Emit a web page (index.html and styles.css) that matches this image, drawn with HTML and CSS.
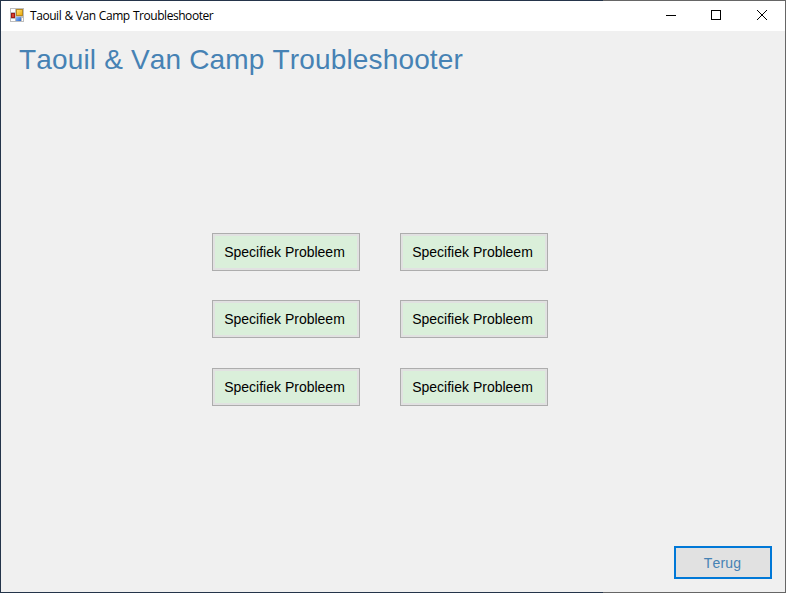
FILE: index.html
```html
<!DOCTYPE html>
<html lang="nl">
<head>
<meta charset="utf-8">
<title>Taouil &amp; Van Camp Troubleshooter</title>
<link rel="stylesheet" href="styles.css">
</head>
<body>
<div class="window">
  <header class="titlebar">
    <svg class="app-icon" width="14" height="14" viewBox="0 0 14 14">
      <defs>
        <linearGradient id="gold" x2="1" y2="1"><stop offset="0" stop-color="#ffe680"/><stop offset="1" stop-color="#eda600"/></linearGradient>
        <linearGradient id="blue" x2="1" y2="1"><stop offset="0" stop-color="#8cbcff"/><stop offset="1" stop-color="#2f68c8"/></linearGradient>
      </defs>
      <path d="M0 0h14v14H0z" fill="#bdbdbd"/>
      <path d="M1 1h4v3H1zM1 11h4v2H1zM12 10h1v3h-1z" fill="#fff"/>
      <rect x="6.5" y="1.5" width="6" height="6" fill="url(#gold)" stroke="#b98a20"/>
      <rect x="1.5" y="5.5" width="3" height="4" fill="#d9402d" stroke="#9d1c17"/>
      <rect x="6" y="9" width="5" height="4" fill="url(#blue)"/>
    </svg>
    <span class="caption">Taouil &amp; Van Camp Troubleshooter</span>
    <div class="controls">
      <svg width="46" height="28"><path d="M19 14.5h10" stroke="#000"/></svg>
      <svg width="46" height="28"><rect x="18.5" y="9.5" width="9" height="9" fill="none" stroke="#000"/></svg>
      <svg width="46" height="28"><path d="M18 9l10 10M28 9l-10 10" stroke="#000"/></svg>
    </div>
  </header>
  <main class="content">
    <h1 class="heading">Taouil &amp; Van Camp Troubleshooter</h1>
    <div class="grid">
      <button class="problem">Specifiek Probleem</button>
      <button class="problem">Specifiek Probleem</button>
      <button class="problem">Specifiek Probleem</button>
      <button class="problem">Specifiek Probleem</button>
      <button class="problem">Specifiek Probleem</button>
      <button class="problem">Specifiek Probleem</button>
    </div>
    <button class="back">Terug</button>
  </main>
</div>
</body>
</html>
```
FILE: styles.css
```css
* { box-sizing: border-box; }
body { margin: 0; }
.window { width: 786px; height: 593px; padding: 1px; background: linear-gradient(#f0f0f0, #f0f0f0) content-box, linear-gradient(90deg, #24344a 603px, #666 603px); display: flex; flex-direction: column; font-family: "Liberation Sans", Arial, sans-serif; }
.titlebar { height: 30px; background: #fff; display: flex; align-items: flex-start; padding-left: 9px; }
.app-icon { flex: none; margin-top: 7px; }
.caption { margin: 6px 0 0 6px; font: 12px/17px "Open Sans", sans-serif; letter-spacing: -0.45px; word-spacing: 0.5px; white-space: nowrap; color: #000; }
.controls { margin-left: auto; display: flex; }
.content { flex: 1; display: flex; flex-direction: column; }
.heading { margin: 12px 0 0 18px; font-size: 28px; line-height: 34px; font-weight: 400; font-kerning: none; letter-spacing: 0.16px; color: #4682b4; white-space: nowrap; }
.grid { display: grid; grid-template-columns: 148px 148px; grid-template-rows: 67px 68px 38px; column-gap: 40px; margin: 156px 0 0 211px; }
.problem { height: 38px; padding: 0 3px 1px 0; border: 1px solid #adadad; box-shadow: inset 0 0 0 2px #e1e1e1; background: #daefda; font: 14px "Liberation Sans", Arial, sans-serif; color: #000; white-space: nowrap; }
.back { align-self: flex-end; margin: auto 13px 13px 0; width: 98px; height: 33px; padding: 0 1px 0 0; border: 2px solid #0078d7; background: #e1e1e1; color: #4682b4; font: 14px "Liberation Sans", Arial, sans-serif; font-kerning: none; letter-spacing: 0.2px; }
```
